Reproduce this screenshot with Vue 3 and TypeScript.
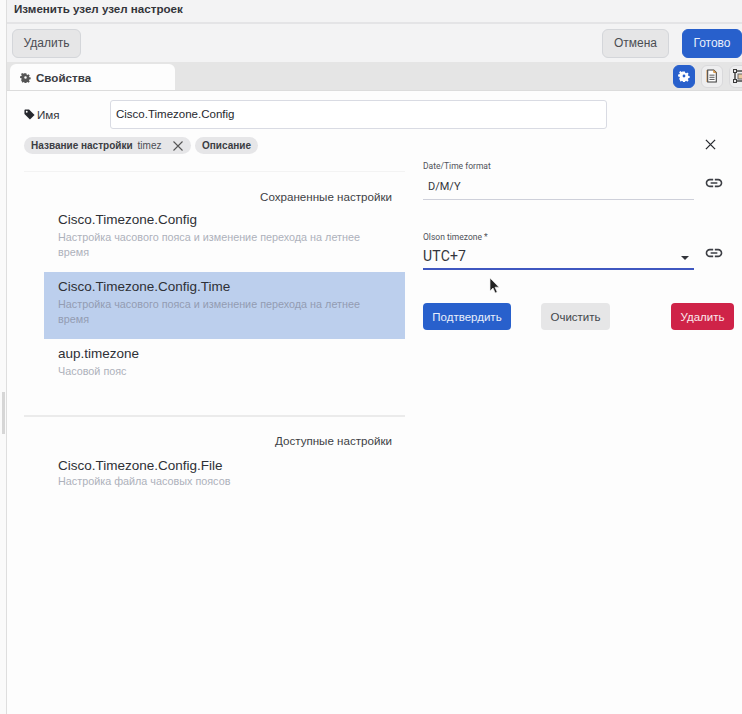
<script setup lang="ts">
interface Setting {
  name: string;
  desc: string;
  selected?: boolean;
}

const saved: Setting[] = [
  { name: 'Cisco.Timezone.Config', desc: 'Настройка часового пояса и изменение перехода на летнее время' },
  { name: 'Cisco.Timezone.Config.Time', desc: 'Настройка часового пояса и изменение перехода на летнее время', selected: true },
  { name: 'aup.timezone', desc: 'Часовой пояс' },
];

const available: Setting[] = [
  { name: 'Cisco.Timezone.Config.File', desc: 'Настройка файла часовых поясов' },
];

const gearPath =
  'M12 9a3 3 0 1 0 0 6 3 3 0 0 0 0-6zM10 2h4l.6 3 2 .9 2.6-1.7 2.8 2.8-1.7 2.6.9 2 3 .6v4l-3 .6-.9 2 1.7 2.6-2.8 2.8-2.6-1.7-2 .9-.6 3h-4l-.6-3-2-.9-2.6 1.7L1.4 18.200l1.700-2.600-.9-2-3-.6v-4l3-.6.9-2-1.700-2.600L4.200 1.400l2.600 1.700 2-.9z';
const linkPath =
  'M3.900 12c0-1.710 1.390-3.100 3.100-3.100h4V7H7c-2.760 0-5 2.240-5 5s2.240 5 5 5h4v-1.900H7c-1.710 0-3.100-1.390-3.100-3.100zM8 13h8v-2H8v2zm9-6h-4v1.900h4c1.710 0 3.100 1.390 3.100 3.100s-1.390 3.100-3.100 3.100h-4V17h4c2.760 0 5-2.240 5-5s-2.240-5-5-5z';
</script>

<template>
  <div class="page">
    <div class="gutter"><span class="grip" /></div>
    <div class="main">
      <header class="title">Изменить узел узел настроек</header>

      <div class="toolbar">
        <button class="btn btn--grey">Удалить</button>
        <div class="toolbar__right">
          <button class="btn btn--grey btn--cancel">Отмена</button>
          <button class="btn btn--blue btn--done">Готово</button>
        </div>
      </div>

      <div class="tabs">
        <div class="tab">
          <svg class="tab__icon" viewBox="-1 -1 26 26"><path :d="gearPath" fill-rule="evenodd" fill="#555" /></svg>
          Свойства
        </div>
        <div class="tabs__icons">
          <span class="square square--active">
            <svg viewBox="-1 -1 26 26" width="12" height="12"><path :d="gearPath" fill-rule="evenodd" fill="#fff" /></svg>
          </span>
          <span class="square">
            <svg viewBox="0 0 14 16" width="12" height="14">
              <path d="M1 1v14" stroke="#d89a55" fill="none" />
              <path d="M2 1h7l3 3v11H2z" fill="#fff" stroke="#3a3a3a" stroke-width="1.200" />
              <path d="M9 1v3h3" fill="#e0a050" stroke="#c98a3c" />
              <path d="M4 7h6M4 9.500h6M4 12h6" stroke="#3a3a3a" />
            </svg>
          </span>
          <span class="square">
            <svg viewBox="0 0 14 14" width="14" height="14">
              <rect x="2" y="2" width="10" height="10" fill="none" stroke="#3a3a3a" stroke-width="1.400" />
              <rect x="5" y="5" width="6" height="5" fill="#e8c9a0" stroke="#666" />
              <rect x="0.500" y="0.500" width="3" height="3" fill="#e8e8e8" stroke="#3a3a3a" />
              <rect x="0.500" y="10.500" width="3" height="3" fill="#e8e8e8" stroke="#3a3a3a" />
            </svg>
          </span>
        </div>
      </div>

      <div class="body">
        <div class="name-row">
          <span class="name-label">
            <svg viewBox="0 0 12 12" width="11" height="11"><path d="M0.500 1.500 C0.500 1 1 .5 1.500.5H5.500L11.500 6.500 6.500 11.500 .5 5.500Z" fill="#26282e" /><circle cx="3" cy="3" r="1" fill="#fff" /></svg>
            Имя
          </span>
          <div class="name-input">Cisco.Timezone.Config</div>
        </div>

        <div class="chips">
          <span class="chip chip--filter">
            <b>Название настройки</b><span class="chip__value">timez</span>
            <svg viewBox="0 0 12 12" width="12" height="12"><path d="M1.500 1.500l9 9M10.500 1.500l-9 9" stroke="#555" stroke-width="1.100" fill="none" /></svg>
          </span>
          <span class="chip"><b>Описание</b></span>
        </div>

        <div class="columns">
          <div class="list">
            <hr class="rule rule--thin" />
            <div class="list__heading">Сохраненные настройки</div>
            <div v-for="item in saved" :key="item.name" class="item" :class="{ 'item--selected': item.selected }">
              <div class="item__name">{{ item.name }}</div>
              <div class="item__desc">{{ item.desc }}</div>
            </div>
            <hr class="rule rule--thick" />
            <div class="list__heading list__heading--avail">Доступные настройки</div>
            <div v-for="item in available" :key="item.name" class="item item--compact">
              <div class="item__name">{{ item.name }}</div>
              <div class="item__desc">{{ item.desc }}</div>
            </div>
          </div>

          <div class="form">
            <div class="form__close">
              <svg viewBox="0 0 12 12" width="11" height="11"><path d="M1 1l10 10M11 1L1 11" stroke="#26282e" stroke-width="1.400" fill="none" /></svg>
            </div>
            <div class="field">
              <div class="field__box">
                <label class="field__label">Date/Time format</label>
                <div class="field__value field__value--text">D/M/Y</div>
              </div>
              <svg class="field__link" viewBox="0 0 24 24"><path :d="linkPath" fill="#3d3f45" /></svg>
            </div>
            <div class="field field--select">
              <div class="field__box field__box--active">
                <label class="field__label">Olson timezone *</label>
                <div class="field__value field__value--select">
                  UTC+7
                  <span class="caret" />
                </div>
              </div>
              <svg class="field__link" viewBox="0 0 24 24"><path :d="linkPath" fill="#3d3f45" /></svg>
            </div>
            <div class="form__actions">
              <button class="act act--blue">Подтвердить</button>
              <button class="act act--grey">Очистить</button>
              <button class="act act--red">Удалить</button>
            </div>
          </div>
        </div>
      </div>
    </div>

    <svg class="cursor" viewBox="0 0 12 18" width="12" height="18">
      <path d="M1 1v13l3-3 2.200 5 2-1-2.200-4.800H10z" fill="#222" stroke="#eee" stroke-width="0.700" />
    </svg>
  </div>
</template>

<style>
html,
body {
  margin: 0;
  background: #fdfdfd;
}
</style>

<style scoped>
.page {
  position: relative;
  display: flex;
  width: 742px;
  height: 714px;
  overflow: hidden;
  font-family: "Liberation Sans", Arial, sans-serif;
  color: #26282e;
  background: #fdfdfd;
}

.gutter {
  position: relative;
  flex: 0 0 7px;
  box-sizing: border-box;
  border-right: 1px solid #dedede;
  background: #fafafa;
}

.grip {
  position: absolute;
  left: 2px;
  top: 392px;
  width: 3px;
  height: 42px;
  background: #d6d6d6;
}

.main {
  flex: 1;
  min-width: 0;
  display: flex;
  flex-direction: column;
}

.title {
  height: 22px;
  padding-left: 7px;
  font-size: 11.600px;
  font-weight: 700;
  line-height: 17px;
  color: #33353b;
  background: #f3f3f4;
  border-bottom: 2px solid #e4e4e6;
}

.toolbar {
  height: 38px;
  display: flex;
  align-items: center;
  justify-content: space-between;
  padding: 0 0 0 5px;
  background: #f3f3f4;
}

.toolbar__right {
  display: flex;
  gap: 13px;
}

.btn {
  height: 29px;
  padding: 0;
  border-radius: 6px;
  font: 12px "Liberation Sans", Arial, sans-serif;
}

.btn--grey {
  width: 69px;
  border: 1px solid #d4d6da;
  background: #e6e6e7;
  color: #4b4d52;
}

.btn--cancel {
  width: 67px;
}

.btn--blue {
  border: 1px solid #2860cc;
  background: #2860cc;
  color: #e9effb;
}

.btn--done {
  width: 60px;
}

.tabs {
  height: 29px;
  display: flex;
  justify-content: space-between;
  align-items: flex-end;
  padding-left: 3px;
  background: #e5e5e5;
  border-bottom: 1px solid #dcdcdc;
  box-sizing: border-box;
}

.tab {
  width: 165px;
  height: 26px;
  box-sizing: border-box;
  display: flex;
  align-items: center;
  gap: 5px;
  padding: 1px 0 0 10px;
  border-radius: 6px 6px 0 0;
  background: #fdfdfd;
  font-size: 11.600px;
  font-weight: 700;
  color: #3a3c42;
}

.tab__icon {
  width: 11px;
  height: 11px;
}

.tabs__icons {
  display: flex;
  gap: 6px;
  align-self: center;
  margin-right: -9px;
}

.square {
  width: 22px;
  height: 23px;
  box-sizing: border-box;
  display: flex;
  align-items: center;
  justify-content: center;
  border: 1px solid #d9d9db;
  border-radius: 6px;
  background: #eeeeef;
}

.square--active {
  border-color: #2860cc;
  background: #2860cc;
}

.body {
  flex: 1;
  padding: 9px 0 0 17px;
}

.name-row {
  display: flex;
  align-items: center;
}

.name-label {
  width: 86px;
  display: flex;
  align-items: center;
  gap: 2px;
  font-size: 11.600px;
  color: #33353b;
}

.name-input {
  width: 497px;
  height: 29px;
  box-sizing: border-box;
  padding-left: 5px;
  border: 1px solid #d9dbe3;
  border-radius: 3px;
  background: #fff;
  font-size: 11.500px;
  line-height: 27px;
}

.chips {
  display: flex;
  gap: 4px;
  margin-top: 8px;
}

.chip {
  height: 17px;
  display: flex;
  align-items: center;
  padding: 0 7px;
  border-radius: 9px;
  background: #e6e6e8;
  font-size: 10px;
  color: #3b3d43;
}

.chip--filter {
  width: 167px;
  box-sizing: border-box;
}

.chip__value {
  margin-left: 5px;
  color: #4d4f55;
}

.chip svg {
  margin-left: auto;
}

.columns {
  display: flex;
}

.list {
  flex: 0 0 381px;
}

.rule {
  margin: 0;
  border: 0;
}

.rule--thin {
  height: 1px;
  margin-top: 17px;
  background: #f3f3f3;
}

.rule--thick {
  height: 2px;
  margin-top: 24px;
  background: #ebebeb;
}

.list__heading {
  height: 16px;
  margin-top: 17px;
  padding-right: 13px;
  text-align: right;
  font-size: 11.600px;
  line-height: 16px;
  color: #3d3f45;
}

.list__heading--avail {
  margin-top: 16px;
}

.item {
  margin-left: 20px;
  padding: 7px 14px 12px;
}

.item--selected {
  background: #bccfed;
}

.item--compact {
  margin-top: 2px;
}

.item__name {
  font-size: 13.500px;
  line-height: 15px;
  color: #2e3036;
}

.item__desc {
  margin-top: 3px;
  font-size: 10.800px;
  line-height: 15px;
  color: #adb1bb;
}

.item--compact .item__desc {
  margin-top: 1px;
}

.item--selected .item__desc {
  color: #939cb2;
}

.form {
  flex: 1;
  min-width: 0;
  padding-left: 18px;
}

.form__close {
  display: flex;
  justify-content: flex-end;
  padding-right: 26px;
  margin-top: -15px;
  height: 22px;
}

.field {
  display: flex;
  gap: 10px;
}

.field--select {
  margin-top: 32px;
}

.field__box {
  width: 271px;
  box-sizing: border-box;
  border-bottom: 1px solid #ced0da;
}

.field__box--active {
  border-bottom: 2px solid #3f57c0;
}

.field__label {
  display: block;
  font: 8.500px/10px Roboto, sans-serif;
  color: #50525a;
}

.field__value {
  font-family: Roboto, sans-serif;
  color: #33353b;
}

.field__value--text {
  padding: 9px 0 5px 5px;
  font-size: 11px;
  line-height: 14px;
}

.field__value--select {
  display: flex;
  justify-content: space-between;
  align-items: center;
  padding: 6px 5px 4px 0;
  font-size: 14px;
  letter-spacing: 0.2px;
  line-height: 16px;
}

.caret {
  width: 0;
  height: 0;
  margin-top: 3px;
  border-left: 4.500px solid transparent;
  border-right: 4.500px solid transparent;
  border-top: 4.500px solid #33353b;
}

.field__link {
  width: 20px;
  height: 20px;
  align-self: flex-end;
  margin-bottom: 7px;
}

.form__actions {
  display: flex;
  width: 311px;
  margin-top: 33px;
}

.act {
  height: 27px;
  padding: 0;
  border: 0;
  border-radius: 4px;
  font: 11.500px "Liberation Sans", Arial, sans-serif;
}

.act--blue {
  width: 88px;
  background: #2860cc;
  color: #e9effb;
}

.act--grey {
  width: 69px;
  margin-left: 30px;
  background: #e6e6e7;
  color: #44464c;
}

.act--red {
  width: 63px;
  margin-left: auto;
  background: #cf2348;
  color: #fbe9ed;
}

.cursor {
  position: absolute;
  left: 489px;
  top: 277px;
}
</style>
